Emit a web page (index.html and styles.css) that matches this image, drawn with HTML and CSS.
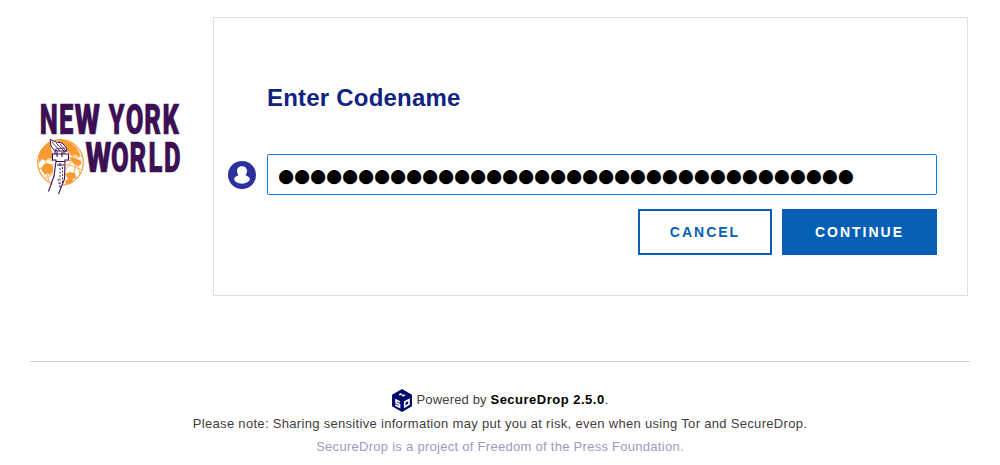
FILE: index.html
```html
<!DOCTYPE html>
<html lang="en">
<head>
<meta charset="utf-8">
<title>Enter Codename | New York World</title>
<link rel="stylesheet" href="styles.css">
</head>
<body>
<div class="page">
  <header class="brand">
    <svg class="logo" viewBox="36 100 148 96" role="img" aria-label="New York World">
      <g class="logo-text" transform="scale(.6 1)">
        <text y="133.600"><tspan x="66.300 98.500">NE</tspan><tspan x="124" textLength="42.500" lengthAdjust="spacingAndGlyphs">W</tspan></text>
        <text x="181 209.500 240.500 271" y="133.600">YORK</text>
        <text y="172.300"><tspan x="142.500" textLength="43" lengthAdjust="spacingAndGlyphs">W</tspan><tspan x="185 216 247.500 273.500">ORLD</tspan></text>
      </g>
      <circle cx="60.500" cy="162.500" r="22.800" fill="#fff" stroke="#f99b32" stroke-width="1.200"/>
      <g fill="#f99b32">
        <path d="M42 149L47 144L51 142L51 149L53 154L52 159L48 158L46 161L42 159L39 163L39 155Z"/>
        <path d="M57 140L64 140L71 143L76 147L80 154L79 158L75 154L72 156L68 151L64 152L61 148L67 146L60 145Z"/>
        <path d="M69 157L74 158L80 160L82 163L79 166L75 165L72 162Z"/>
        <path d="M41 169L44 164L48 163L53 166L53 172L50 175L47 173L45 175Z"/>
        <path d="M65 174L70 172L75 173L76 177L73 179L72 183L66 185L65 181L68 179Z"/>
      </g>
      <g fill="none" stroke="#f99b32" stroke-width=".8">
        <path d="M40 155Q61 169 82 155M39 169Q60 158 82 170M48 145Q43 163 49 181M70 143Q82 162 70 182M53 141Q78 155 80 174M77 148Q70 171 51 182M45 178Q60 169 77 178"/>
      </g>
      <path d="M54 160L67 160L65 174L61 193L58 188L50 182L54 172Z" fill="#fff"/>
      <path d="M50 139.500L56 142L62 143L66 147L67 151L60 152L54 150L51 146Z" fill="#fff" stroke="#3c1053"/>
      <path d="M52 142L60 151M56 143L64 151M60 144L66 151M55 149L65 148" stroke="#3c1053" stroke-width=".8"/>
      <g fill="#fff" stroke="#3c1053" stroke-width="1.100">
        <path d="M55 151H64V154H55ZM52.500 154H68.500V160H65V161.500H56V160H52.500ZM57 152V157M62 152V157"/>
        <path d="M56 161.500L54 176L48.500 191.500M65 162L64.500 179L58.500 194M57 165H64M60 163V166" fill="none"/>
      </g>
      <path d="M60 168V188M62.500 167V183M58 179L60 187" fill="none" stroke="#3c1053" stroke-width=".9" stroke-dasharray="2 1.500"/>
    </svg>
  </header>
  <main class="panel">
    <h1 class="title">Enter Codename</h1>
    <form class="login">
      <div class="field">
        <svg class="user" viewBox="0 0 28 28" aria-hidden="true">
          <circle cx="14" cy="14" r="14" fill="#2a319c"/>
          <path d="M14 5.200C11 5.200 9 7.200 9 10C9 12 10 13.500 10.500 14.300C8 15.200 6.200 16.500 6.200 18C6.200 20.500 10 22.700 14 22.700S21.800 20.500 21.800 18C21.800 16.500 20 15.200 17.500 14.300C18 13.500 19 12 19 10C19 7.200 17 5.200 14 5.200Z" fill="#fff"/>
        </svg>
        <div class="codename" role="textbox" aria-label="Codename">●●●●●●●●●●●●●●●●●●●●●●●●●●●●●●●●●●●●</div>
      </div>
      <div class="actions">
        <button class="btn cancel" type="button">CANCEL</button>
        <button class="btn continue" type="button">CONTINUE</button>
      </div>
    </form>
  </main>
</div>
<footer class="footer">
  <p class="powered">
    <svg class="cube" viewBox="0 0 20 23" aria-hidden="true">
      <path d="M10 0L20 5.700V17.300L10 23L0 17.300V5.700Z" fill="#000b6b"/>
      <path d="M6.800 5L9 4L10.500 5.700L12.800 5.500L13.500 6.400L11 7.700L9.300 6L7.700 6.400Z" fill="#fff"/>
      <path d="M7.800 13L4 11V13.700L7.600 15.500V18.200L3.300 16" fill="none" stroke="#fff" stroke-width="1.500"/>
      <path d="M12.700 13L17 10.700V15.300L12.700 17.900Z" fill="none" stroke="#fff" stroke-width="1.600"/>
    </svg>
    <span class="version">Powered by <strong>SecureDrop 2.5.0</strong>.</span>
  </p>
  <p class="note">Please note: Sharing sensitive information may put you at risk, even when using Tor and SecureDrop.</p>
  <p class="project">SecureDrop is a project of Freedom of the Press Foundation.</p>
</footer>
</body>
</html>
```

FILE: styles.css
```css
* { box-sizing: border-box; }
body {
  margin: 0;
  padding: 17px 30px 0;
  background: #fff;
  font: 13px/23px "Liberation Sans", Arial, sans-serif;
  color: #404040;
}
.page { display: flex; }
.brand { width: 183px; padding: 83px 0 0 6px; }
.logo { display: block; width: 148px; height: 96px; overflow: visible; }
.logo-text {
  font: 900 42.8px Roboto, "Liberation Sans", sans-serif;
  fill: #3c1053;
  stroke: #3c1053;
  stroke-width: .6px;
}
.panel {
  width: 755px;
  height: 279px;
  padding: 66px 30px 0 14px;
  border: 1px solid #e0e0e0;
}
.title {
  margin: 0 0 42px 39px;
  font-size: 24px;
  line-height: 28px;
  letter-spacing: .21px;
  color: #0f2380;
}
.field { display: flex; align-items: center; gap: 11px; }
.user { width: 28px; height: 28px; }
.codename {
  width: 670px;
  height: 41px;
  padding-left: 10px;
  border: 1px solid #0a7cf0;
  border-radius: 2px;
  font: 18.6px/41px "DejaVu Sans", sans-serif;
  letter-spacing: -.23px;
  white-space: nowrap;
  color: #000;
}
.actions { display: flex; justify-content: flex-end; gap: 10px; margin-top: 14px; }
.btn {
  height: 46px;
  padding: 0;
  border: 2px solid #055fb4;
  font: bold 14px "Liberation Sans", Arial, sans-serif;
  letter-spacing: 2px;
  color: #055fb4;
  background: #fff;
}
.cancel { width: 134px; }
.continue { width: 155px; color: #fff; background: #055fb4; }
.footer {
  margin-top: 65px;
  padding-top: 26px;
  border-top: 1px solid #d0d0d0;
  text-align: center;
  letter-spacing: .31px;
}
.footer p { margin: 0; }
.powered { display: flex; align-items: center; justify-content: center; gap: 5px; height: 24px; }
.powered strong { letter-spacing: .5px; color: #000; }
.version { margin-bottom: 2px; letter-spacing: .15px; }
.cube { width: 20px; height: 23px; }
.footer .project { letter-spacing: .28px; color: #a099c4; }
```
